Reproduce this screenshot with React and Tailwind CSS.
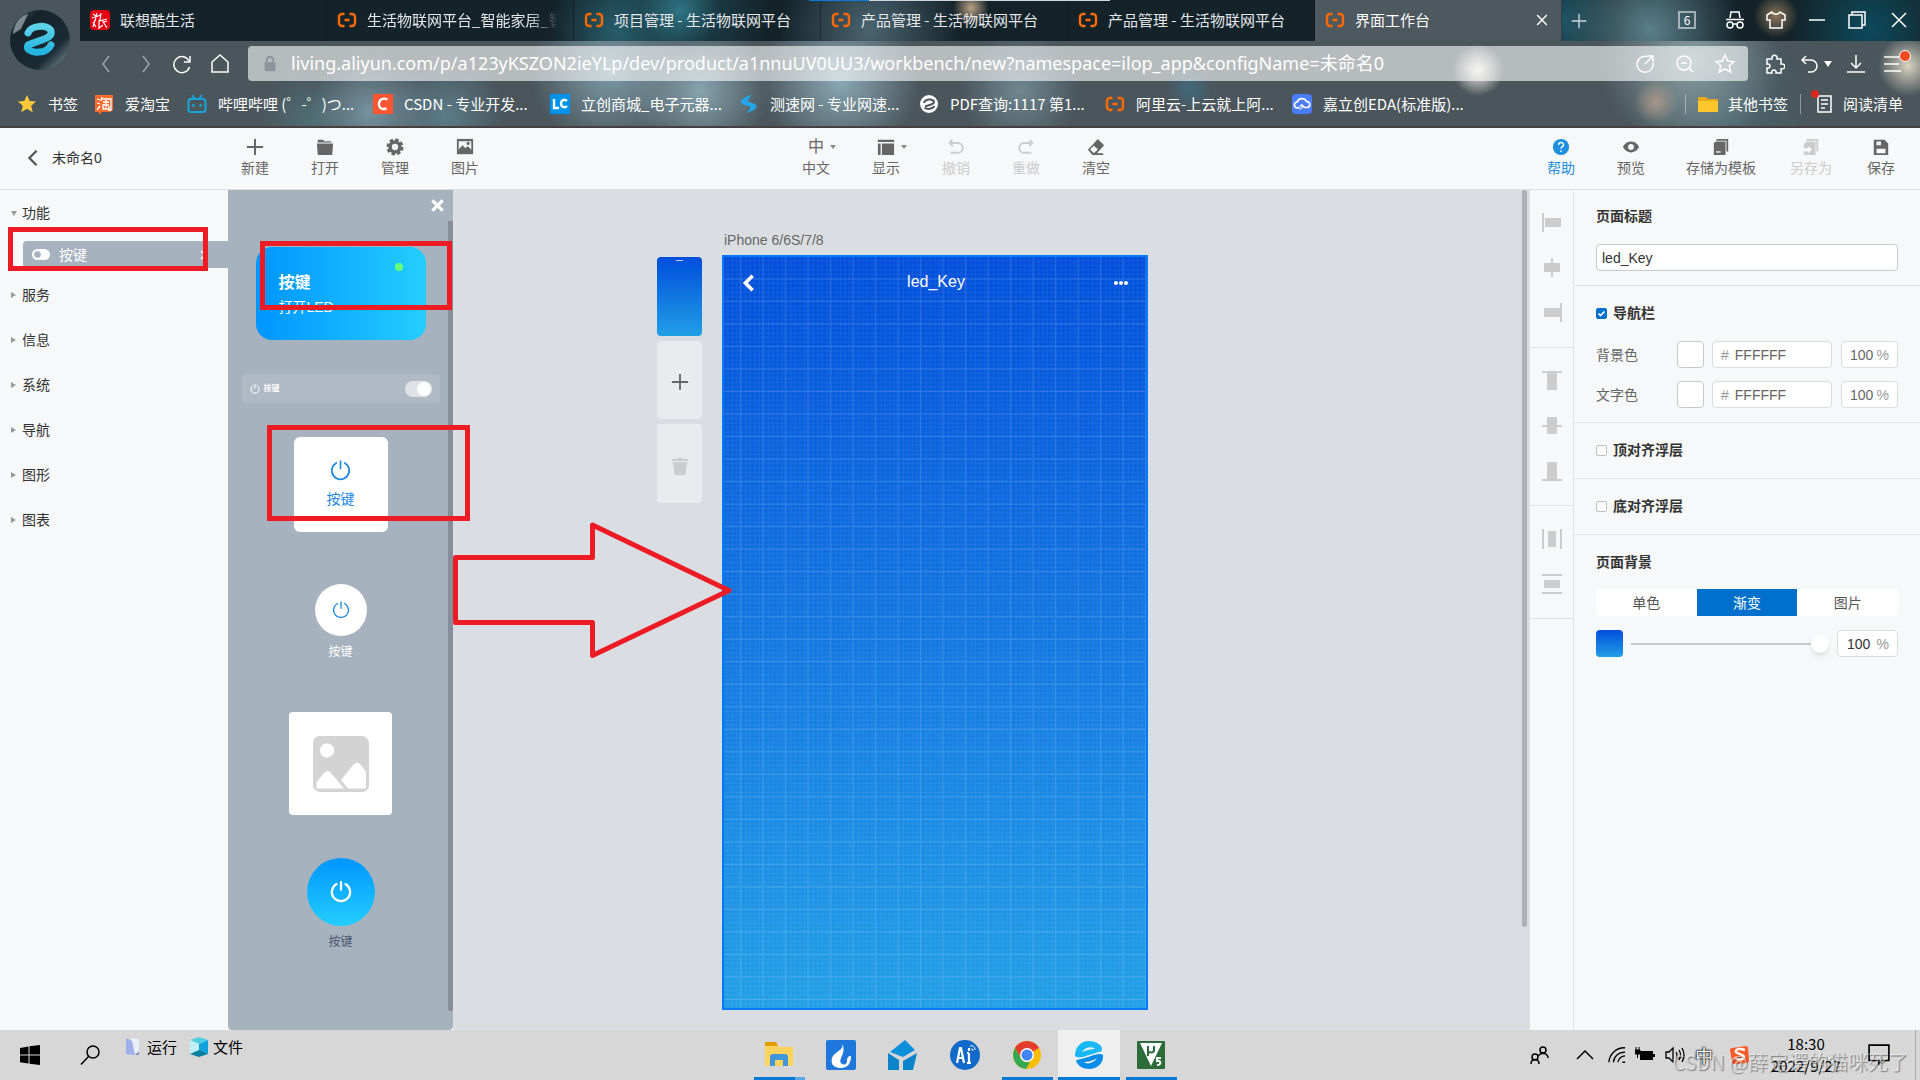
import React from 'react';

const TABS = [
  { title: '联想酷生活', icon: 'lenovo' },
  { title: '生活物联网平台_智能家居_智能', icon: 'aliyun', fade: true },
  { title: '项目管理 - 生活物联网平台', icon: 'aliyun' },
  { title: '产品管理 - 生活物联网平台', icon: 'aliyun' },
  { title: '产品管理 - 生活物联网平台', icon: 'aliyun' },
  { title: '界面工作台', icon: 'aliyun', active: true },
];

const BOOKMARKS = [
  { title: '书签', icon: 'star', width: 'w-[77px]' },
  { title: '爱淘宝', icon: 'taobao', width: 'w-[93px]' },
  { title: '哔哩哔哩 (゜-゜)つ...', icon: 'bili', width: 'w-[186px]' },
  { title: 'CSDN - 专业开发...', icon: 'csdn', width: 'w-[177px]' },
  { title: '立创商城_电子元器...', icon: 'lc', width: 'w-[189px]' },
  { title: '测速网 - 专业网速...', icon: 'speed', width: 'w-[180px]' },
  { title: 'PDF查询:1117 第1...', icon: 'pdf', width: 'w-[186px]' },
  { title: '阿里云-上云就上阿...', icon: 'aliyun', width: 'w-[187px]' },
  { title: '嘉立创EDA(标准版)...', icon: 'eda', width: 'w-[180px]' },
];

const FILE_TOOLS = [
  { name: '新建', icon: 'plus' },
  { name: '打开', icon: 'folder' },
  { name: '管理', icon: 'gear' },
  { name: '图片', icon: 'image' },
];

const EDIT_TOOLS = [
  { name: '中文', icon: 'lang', caret: true },
  { name: '显示', icon: 'layout', caret: true },
  { name: '撤销', icon: 'undo', disabled: true },
  { name: '重做', icon: 'redo', disabled: true },
  { name: '清空', icon: 'eraser' },
];

const SAVE_TOOLS = [
  { name: '帮助', icon: 'help', active: true },
  { name: '预览', icon: 'eye' },
  { name: '存储为模板', icon: 'template', wide: true },
  { name: '另存为', icon: 'saveas', disabled: true },
  { name: '保存', icon: 'save' },
];

const CATEGORIES = ['服务', '信息', '系统', '导航', '图形', '图表'];

const ALIGN_GROUPS = [
  [
    'M1 1h2v19h-2z M4 6h16v9h-16z',
    'M10 1h2v19h-2z M3 6h16v9h-16z',
    'M19 1h2v19h-2z M3 6h16v9h-16z',
  ],
  [
    'M1 1h20v2h-20z M6 3h10v17h-10z',
    'M1 10h20v2h-20z M6 2h10v17h-10z',
    'M1 19h20v2h-20z M6 2h10v17h-10z',
  ],
  [
    'M1 1h2v20h-2z M19 1h2v20h-2z M7 3h8v16h-8z',
    'M1 1h20v2h-20z M1 19h20v2h-20z M3 7h16v8h-16z',
  ],
];

const SITE_ICONS = {
  lenovo: (
    <>
      <rect width="20" height="20" rx="4" fill="#e60012" />
      <path d="M3 4l3 2M2 8l9-3M7 3l-2 8M11 3l-1 7M3 12l3 5M5 10l-2 7M9 10v8l4-3M9 11l8-2M12 10l5 8M14 12l3-1" stroke="#fff" strokeWidth="1.2" fill="none" />
    </>
  ),
  aliyun: (
    <path d="M7.500 4H5a3 3 0 0 0-3 3v6a3 3 0 0 0 3 3h2.500M12.500 4H15a3 3 0 0 1 3 3v6a3 3 0 0 1-3 3h-2.500M7.500 10h5" stroke="#ff6a00" strokeWidth="2.400" fill="none" />
  ),
  star: <path d="M10 1l2.700 6 6.300.6-4.800 4.200 1.500 6.400L10 14.800l-5.700 3.400 1.500-6.400L1 7.600 7.300 7z" fill="#ffc93c" />,
  taobao: (
    <>
      <path d="M1 1h18v15l-3 2H8l-3 3v-3H1z" fill="#ff6a2b" />
      <path d="M3 5l3 1M3 9l3 1M3 16l3-4M8 3l-1 4M8 5h9v11h-3M9 8h6M8 11h7M12 6v8M9 12v3h6v-3" stroke="#fff" strokeWidth="1.300" fill="none" />
    </>
  ),
  bili: (
    <>
      <path d="M5 1l3 4M15 1l-3 4" stroke="#16a6dc" strokeWidth="2" />
      <rect x="1.500" y="5" width="17" height="13" rx="2.500" fill="none" stroke="#16a6dc" strokeWidth="2" />
      <path d="M6.500 10v3M13.500 10v3" stroke="#16a6dc" strokeWidth="2" />
    </>
  ),
  csdn: (
    <>
      <rect width="20" height="20" fill="#fc5531" />
      <path d="M14.500 5.500c-4-2-8-.5-8.500 4-.4 4.500 3 6.500 7.500 5" stroke="#fff" strokeWidth="2.400" fill="none" />
    </>
  ),
  lc: (
    <>
      <rect width="20" height="20" fill="#0093e9" />
      <path d="M4 5v9h5M17 7c-2.500-2.500-6-.8-6 2.500s3.500 5 6 2.500" stroke="#fff" strokeWidth="2.400" fill="none" />
    </>
  ),
  speed: <path d="M13 1C4 3 0 7 3 10c2 2 7 1 8 3 1 2-2 4-4 6 8-2 12-5 10-8-1.500-2.500-7-1.500-8-4-.6-2 2-4 4-6z" fill="#25a5e8" />,
  pdf: (
    <>
      <circle cx="10" cy="10" r="9" fill="#fff" />
      <path d="M5 9c1-4 9-5 10-1 0 2-3 2.500-9 4.500M15.500 12c-2 3-7 4-10 1.500" stroke="#4b565e" strokeWidth="2" fill="none" />
    </>
  ),
  eda: (
    <>
      <rect width="20" height="20" rx="4" fill="#4a7dff" />
      <path d="M7 14H5.500a3 3 0 0 1-.3-6A5 5 0 0 1 14.500 7.500a3 3 0 0 1 .5 6h-2.500L9 10.500" stroke="#fff" strokeWidth="1.700" fill="none" />
      <circle cx="8.500" cy="13.500" r="1.500" fill="none" stroke="#fff" />
    </>
  ),
};

const TOOL_ICONS = {
  plus: <path d="M10 1v18M1 10h18" stroke="currentColor" strokeWidth="2.200" />,
  folder: <path d="M2 2h6l1 1.500h8V5H2zM1 6h18l-1 13H2z" fill="currentColor" />,
  gear: (
    <>
      <circle cx="10" cy="10" r="5.500" fill="none" stroke="currentColor" strokeWidth="4" />
      <circle cx="10" cy="10" r="8" fill="none" stroke="currentColor" strokeWidth="3" strokeDasharray="3.800 2.483" />
    </>
  ),
  image: (
    <>
      <path d="M1 1h18v17H1z" fill="currentColor" />
      <path d="M3 13l4-4 3 3 3-2 4 4V3.500H3z" fill="#f6f8f9" />
      <path d="M3 15v-2l4-5 3.500 3.500L13 9l4 4v2z" fill="currentColor" />
      <circle cx="13.500" cy="6" r="1.700" fill="currentColor" />
    </>
  ),
  layout: <path d="M1 2h18v2.500H1zM1 6h3v13H1zM5.500 6H19v13H5.500z" fill="currentColor" />,
  undo: <path d="M6 2L3 5.500 6.500 9M3 5.500h9a5 5 0 0 1 0 11H4" stroke="currentColor" strokeWidth="2.200" fill="none" />,
  redo: <path d="M14 2l3 3.500L13.500 9M17 5.500H8a5 5 0 0 0 0 11h8" stroke="currentColor" strokeWidth="2.200" fill="none" />,
  eraser: (
    <>
      <path d="M12 1l7 7-8 9H18v2H6l-5-6z" fill="currentColor" />
      <path d="M7.500 8.500l4.500 4-3.500 4H7l-3.500-3.800z" fill="#f6f8f9" />
    </>
  ),
  help: (
    <>
      <circle cx="10" cy="10" r="9" fill="#1f8fe0" />
      <path d="M7.300 7.800C7.300 4 13 4.200 12.800 7.600c-.1 2-2.800 2-2.800 4.400M10 13.500v2" stroke="#fff" strokeWidth="1.500" fill="none" />
    </>
  ),
  eye: (
    <>
      <path d="M1 10c4-8 14-8 18 0-4 8-14 8-18 0z" fill="currentColor" />
      <circle cx="10" cy="10" r="3.200" fill="#f6f8f9" />
    </>
  ),
  template: (
    <>
      <path d="M5 1h13v14h-2V3H5z" fill="currentColor" />
      <path d="M4 4h11v15H2V6z" fill="currentColor" />
      <path d="M4.500 15.500h5" stroke="#f6f8f9" strokeWidth="1.500" />
    </>
  ),
  saveas: (
    <>
      <path d="M5 1h13v14h-2V3H5z" fill="currentColor" />
      <path d="M5 4h10v15H2v-4h5v2l4-4-4-4v2H2V7z" fill="currentColor" />
    </>
  ),
  save: (
    <>
      <path d="M2 2h12l4 4v13H2z" fill="currentColor" />
      <path d="M5 4h5v4H5zM5 12h10v5H5z" fill="#f6f8f9" />
    </>
  ),
};

const SiteIcon = ({ name }) => (
  <svg viewBox="0 0 20 20" className="w-5 h-5 shrink-0" aria-hidden="true">{SITE_ICONS[name]}</svg>
);

const PowerIcon = ({ className, width = 2 }) => (
  <svg viewBox="0 0 20 20" className={className} fill="none" stroke="currentColor" strokeWidth={width} strokeLinecap="round" aria-hidden="true">
    <path d="M10 1v7M6 2.800a8.300 8.300 0 1 0 8 0" />
  </svg>
);

const LineIcon = ({ d, className = 'w-5 h-5', width = 1.5 }) => (
  <svg viewBox="0 0 20 20" className={className} fill="none" stroke="currentColor" strokeWidth={width} aria-hidden="true">
    <path d={d} />
  </svg>
);

const BrowserLogo = () => (
  <svg viewBox="0 0 60 60" className="w-[60px] h-[60px]" aria-hidden="true">
    <defs>
      <linearGradient id="orb" x1="0" y1="0" x2="1" y2="1">
        <stop offset="0" stopColor="#4e5e68" />
        <stop offset="0.25" stopColor="#15232b" />
        <stop offset="0.7" stopColor="#1b2b33" />
        <stop offset="1" stopColor="#8fa3ab" />
      </linearGradient>
      <linearGradient id="orbE" x1="0" y1="0" x2="0" y2="1">
        <stop offset="0" stopColor="#5fd3ea" />
        <stop offset="1" stopColor="#22b4df" />
      </linearGradient>
    </defs>
    <circle cx="30" cy="30" r="30" fill="url(#orb)" />
    <path d="M3 24C4 14 10 6 18 4l-7 15z" fill="#b9c6cb" opacity="0.6" />
    <path d="M18 23c3-8 20-9 23-2 2 7-8 8-23 14-3 4 4 8 11 7 6 0 10-3 12-7" stroke="url(#orbE)" strokeWidth="7" strokeLinecap="round" strokeLinejoin="round" fill="none" />
  </svg>
);

const Browser = () => (
  <header className="relative shrink-0 text-white text-[15px] border-b-2 border-[#453f40] bg-[#4a555c] bg-[radial-gradient(circle_at_1478px_70px,#e8e6dd_0px,#e8e6dd80_14px,transparent_26px),radial-gradient(circle_at_1656px_102px,#a8978a_0px,transparent_22px),radial-gradient(circle_at_1908px_66px,#d8d4bf_0px,transparent_30px),radial-gradient(circle_at_370px_112px,#7593a0_0px,transparent_60px),radial-gradient(circle_at_445px_116px,#5b7c88_0px,transparent_60px),radial-gradient(circle_at_310px_120px,#4f6d74_0px,transparent_50px),radial-gradient(circle_at_610px_70px,#7d9da8_0px,transparent_80px),radial-gradient(circle_at_700px_90px,#86a3ad_0px,transparent_70px),radial-gradient(circle_at_840px_80px,#8aa9b5_0px,transparent_80px),radial-gradient(circle_at_1020px_90px,#6f8790_0px,transparent_60px),radial-gradient(circle_at_1190px_88px,#41697b_0px,transparent_24px),radial-gradient(circle_at_1690px_60px,#8a9fa3_0px,transparent_90px),radial-gradient(circle_at_1720px_110px,#4c686f_0px,transparent_90px)] font-['Noto_Sans_CJK_SC',sans-serif]">
    <div className="flex">
      <div className="w-[80px] shrink-0 flex justify-center pt-[10px]">
        <BrowserLogo />
      </div>
      <div className="flex-1 min-w-0">
        <nav className="flex items-center h-[41px] bg-[#14232a] bg-[radial-gradient(circle_at_600px_10px,#2f7483_0px,#1f4b5880_40px,transparent_90px),radial-gradient(circle_at_540px_30px,#2a6270_0px,transparent_70px),radial-gradient(circle_at_891px_8px,#b8a183_0px,transparent_18px),radial-gradient(circle_at_790px_30px,#4b6470_0px,transparent_90px),radial-gradient(circle_at_1696px_16px,#8a7458_0px,transparent_22px),radial-gradient(circle_at_1570px_30px,#5b7f8a_0px,transparent_90px),radial-gradient(circle_at_1480px_20px,#1d5566_0px,transparent_60px),radial-gradient(circle_at_1790px_30px,#0d4a5c_0px,transparent_80px)]">
          {TABS.map((tab, i) => (
            <button
              key={i}
              className={`flex items-center gap-[10px] w-[247px] min-w-0 h-[41px] pl-[10px] pb-[2px] text-left border-r border-black/30 ${tab.active ? 'bg-[#4d585f] text-white' : 'text-gray-200'}`}
            >
              <SiteIcon name={tab.icon} />
              <span className={`whitespace-nowrap overflow-hidden ${tab.fade ? 'w-[190px] [mask-image:linear-gradient(to_right,#000_160px,transparent_192px)]' : 'flex-1'}`}>{tab.title}</span>
              {tab.active && <LineIcon className="w-[14px] h-[14px] mr-3" d="M3 3l14 14M17 3L3 17" width={2} />}
            </button>
          ))}
          <button aria-label="新标签页" className="ml-2 text-gray-300"><LineIcon className="w-[18px] h-[18px]" d="M10 2v16M2 10h16" /></button>
          <div className="ml-auto flex items-center pr-[11px] pb-[2px]">
            <button className="w-[18px] h-[18px] border-2 border-gray-300/70 text-xs leading-[14px] mr-[29px]">6</button>
            <button aria-label="无痕" className="mr-[21px]"><LineIcon d="M5 8l1-6h8l1 6M1 9.500h18M8 15a3 3 0 1 0-6 0 3 3 0 0 0 6 0zM18 15a3 3 0 1 0-6 0 3 3 0 0 0 6 0zM8 14h4" /></button>
            <button aria-label="皮肤" className="mr-[21px]"><LineIcon d="M6 2L1 5v5h3v8h12v-8h3V5l-5-3c-1 3-7 3-8 0z" /></button>
            <button aria-label="最小化" className="mr-[20px]"><LineIcon d="M2 10h16" /></button>
            <button aria-label="还原" className="mr-[22px]"><LineIcon d="M2 5h13v13H2zM5 5V2h13v13h-3" /></button>
            <button aria-label="关闭"><LineIcon d="M3 3l14 14M17 3L3 17" /></button>
          </div>
        </nav>
        <div className="flex items-center h-[45px] pl-[16px] pr-[17px]">
          <button aria-label="后退" className="mr-5 text-gray-400"><LineIcon d="M13 2L7 10l6 8" /></button>
          <button aria-label="前进" className="mr-4 text-gray-400"><LineIcon d="M7 2l6 8-6 8" /></button>
          <button aria-label="刷新" className="mr-[18px]"><LineIcon d="M17 7A8 8 0 1 0 17.500 13M18 2v6h-6" /></button>
          <button aria-label="主页" className="mr-[18px]"><LineIcon d="M2 18V8l8-7 8 7v10z" /></button>
          <div className="flex-1 min-w-0 h-[35px] flex items-center rounded bg-white/60 pl-[13px] pr-[13px]">
            <svg viewBox="0 0 20 20" className="w-[18px] h-[18px] mr-[12px] shrink-0" aria-hidden="true">
              <path d="M4 8h12v10H4z" fill="#8d949c" />
              <path d="M6.500 8V5.500a3.500 3.500 0 0 1 7 0V8" stroke="#8d949c" strokeWidth="2" fill="none" />
            </svg>
            <input
              aria-label="地址"
              className="flex-1 min-w-0 bg-transparent outline-none text-lg text-white pb-[2px] font-['Noto_Sans','Noto_Sans_CJK_SC',sans-serif]"
              defaultValue="living.aliyun.com/p/a123yKSZON2ieYLp/dev/product/a1nnuUV0UU3/workbench/new?namespace=ilop_app&configName=未命名0"
            />
            <div className="flex items-center gap-5">
              <button aria-label="分享"><LineIcon d="M12 2.500A8 8 0 1 0 18 9M10 10l8-8M12 2h6v6" /></button>
              <button aria-label="缩小"><LineIcon d="M16 9A7 7 0 1 0 2 9a7 7 0 0 0 14 0zM14 14l4 4M6 9h6" /></button>
              <button aria-label="收藏"><LineIcon d="M10 1l2.700 6 6.300.6-4.800 4.200 1.500 6.400L10 14.800l-5.700 3.400 1.500-6.400L1 7.600 7.300 7z" /></button>
            </div>
          </div>
          <div className="flex items-center pl-[17px]">
            <button aria-label="扩展" className="mr-[15px]"><LineIcon d="M2 5h5c-1-5 6-5 5 0h4v5c5-1 5 6 0 5v4h-5c1-4-5-4-4 0H2v-5c4 1 4-5 0-4z" /></button>
            <button aria-label="撤销关闭" className="mr-[14px] flex items-center gap-1">
              <LineIcon d="M6 2L2 6l4 4M2 6h9a6 6 0 0 1 0 12H8" />
              <svg viewBox="0 0 8 6" className="w-2 h-[6px]" aria-hidden="true"><path d="M0 0h8L4 6z" fill="#fff" /></svg>
            </button>
            <button aria-label="下载" className="mr-[17px]"><LineIcon d="M10 1v13M5 9l5 5 5-5M1 18h18" /></button>
            <button aria-label="菜单" className="relative">
              <LineIcon d="M1 3h15M1 10h15M1 17h17" />
              <span className="absolute -top-1 -right-2 w-3 h-3 rounded-full bg-[#f04a23] border border-white" />
            </button>
          </div>
        </div>
      </div>
    </div>
    <nav className="flex items-center h-[40px] pl-[17px] pr-[17px] pb-1">
      {BOOKMARKS.map((b) => (
        <a key={b.title} href="#" className={`flex items-center gap-[11px] shrink-0 whitespace-nowrap ${b.width}`}>
          <SiteIcon name={b.icon} />
          <span>{b.title}</span>
        </a>
      ))}
      <div className="ml-auto flex items-center h-5">
        <a href="#" className="flex items-center gap-[10px] h-5 border-l border-white/40 pl-3 pr-3">
          <svg viewBox="0 0 20 20" className="w-5 h-5" aria-hidden="true">
            <path d="M0 3h8l2 2h10v13H0z" fill="#e8a81c" />
            <path d="M0 7h20v11H0z" fill="#ffc72c" />
          </svg>
          其他书签
        </a>
        <a href="#" className="relative flex items-center gap-[10px] h-5 border-l border-white/40 pl-3">
          <LineIcon d="M5 2h13v16H5zM8 6h7M8 10h7M8 14h4" />
          <span className="absolute -top-1 left-[10px] w-2 h-2 rounded-full bg-[#d9281e]" />
          阅读清单
        </a>
      </div>
    </nav>
    <div className="absolute top-0 left-[809px] w-[301px] h-px bg-gray-300">
      <div className="w-[60px] h-px bg-[#0a78d6]" />
    </div>
  </header>
);

const ToolButton = ({ tool }) => (
  <button
    disabled={tool.disabled}
    className={`flex flex-col items-center gap-px ${tool.wide ? 'w-[110px]' : 'w-[70px]'} ${tool.active ? 'text-[#1f8fe0]' : tool.disabled ? 'text-[#ccc]' : 'text-[#666]'}`}
  >
    <span className="flex items-center gap-[6px] h-5">
      {tool.icon === 'lang' ? (
        <span className="text-base leading-5">中</span>
      ) : (
        <svg viewBox="0 0 20 20" className="w-[18px] h-[18px]" aria-hidden="true">{TOOL_ICONS[tool.icon]}</svg>
      )}
      {tool.caret && (
        <svg viewBox="0 0 6 4" className="w-[6px] h-1 -mr-3" aria-hidden="true"><path d="M0 0h6L3 4z" fill="#888" /></svg>
      )}
    </span>
    <span className="leading-5">{tool.name}</span>
  </button>
);

const Toolbar = () => (
  <div className="flex items-center h-[62px] shrink-0 bg-[#f6f8f9] border-b border-[#dcdfe3] pr-1 pb-[2px]">
    <button className="flex items-center gap-[10px] w-[220px] pl-6 text-[#333]">
      <LineIcon className="w-[18px] h-[18px] text-[#555]" d="M14 2l-8 8 8 8" width={2.5} />
      未命名0
    </button>
    <div className="flex">{FILE_TOOLS.map((t) => <ToolButton key={t.name} tool={t} />)}</div>
    <div className="flex ml-[281px]">{EDIT_TOOLS.map((t) => <ToolButton key={t.name} tool={t} />)}</div>
    <div className="flex ml-auto">{SAVE_TOOLS.map((t) => <ToolButton key={t.name} tool={t} />)}</div>
  </div>
);

const Sidebar = () => (
  <aside className="w-[228px] shrink-0 bg-[#f6f8f9] text-[#333]">
    <button className="flex items-center gap-[5px] h-[45px] pl-[11px]">
      <svg viewBox="0 0 6 6" className="w-[6px] h-[6px]" aria-hidden="true"><path d="M0 1h6L3 6z" fill="#999" /></svg>
      功能
    </button>
    <button className="flex items-center h-[27px] ml-[23px] mt-[6px] mb-1 w-[205px] pl-[9px] pr-5 rounded-l bg-[#a6b2be] text-white">
      <svg viewBox="0 0 18 11" className="w-[18px] h-[11px] mr-[9px]" aria-hidden="true">
        <rect width="18" height="11" rx="5.500" fill="#fff" />
        <circle cx="5.500" cy="5.500" r="3.300" fill="#a6b2be" />
      </svg>
      按键
      <LineIcon className="w-[10px] h-[10px] ml-auto" d="M6 2l8 8-8 8" width={3} />
    </button>
    {CATEGORIES.map((name) => (
      <button key={name} className="flex items-center gap-[5px] w-full h-[45px] pl-[11px]">
        <svg viewBox="0 0 6 6" className="w-[6px] h-[6px]" aria-hidden="true"><path d="M0 0v6l5-3z" fill="#999" /></svg>
        {name}
      </button>
    ))}
  </aside>
);

const Palette = () => (
  <section className="relative w-[225px] shrink-0 bg-[#a6b2be] rounded-b-sm flex flex-col items-center">
    <button aria-label="关闭" className="self-end mr-[9px] mt-[9px] text-white">
      <LineIcon className="w-[13px] h-[13px]" d="M2 2l16 16M18 2L2 18" width={5} />
    </button>

    <div className="relative w-[170px] h-[93px] mt-[35px] rounded-2xl bg-linear-to-r/srgb from-[#0095ff] to-[#23ceff] text-white pl-[23px] pt-6">
      <p className="text-base leading-6 font-bold">按键</p>
      <p className="leading-6">打开LED</p>
      <span className="absolute top-4 right-[23px] w-2 h-2 rounded-full bg-[#66ff77]" />
    </div>

    <div className="flex items-center w-[198px] h-[29px] mt-[34px] rounded bg-white/10 px-2 text-white">
      <PowerIcon className="w-[10px] h-[10px] mr-1" />
      <span className="text-[8px] leading-3 font-bold">按键</span>
      <span className="ml-auto w-[27px] h-4 rounded-full bg-white/60 flex justify-end p-px">
        <span className="w-[14px] h-[14px] rounded-full bg-white" />
      </span>
    </div>

    <div className="w-[94px] h-[95px] mt-[34px] rounded-md bg-white text-[#1e88e5] flex flex-col items-center pt-[23px] gap-2">
      <PowerIcon className="w-[21px] h-[21px]" width={1.6} />
      <span className="leading-5">按键</span>
    </div>

    <div className="mt-[52px] flex flex-col items-center">
      <div className="w-[52px] h-[52px] rounded-full bg-white text-[#1e88e5] flex items-center justify-center">
        <PowerIcon className="w-[18px] h-[18px]" width={1.5} />
      </div>
      <span className="mt-2 text-xs leading-4 text-white">按键</span>
    </div>

    <div className="w-[103px] h-[103px] mt-[52px] rounded-sm bg-white flex items-center justify-center">
      <svg viewBox="0 0 56 56" className="w-[56px] h-[56px]" aria-hidden="true">
        <rect width="56" height="56" rx="7" fill="#d3d3d3" />
        <circle cx="14" cy="14.500" r="7.200" fill="#fff" />
        <path d="M3.500 52.500v-6L11 37q3.500-4 7 0l13 15.500zM35 52.500L28 44l12-15q4-4.500 8 0l5 7v16.500z" fill="#fff" />
      </svg>
    </div>

    <div className="mt-[43px] flex flex-col items-center">
      <div className="w-[68px] h-[68px] rounded-full bg-linear-to-b/srgb from-[#0095ff] to-[#23ceff] text-white flex items-center justify-center">
        <PowerIcon className="w-[22px] h-[22px]" />
      </div>
      <span className="mt-2 text-xs leading-4 text-[#4b5670]">按键</span>
    </div>

    <div className="absolute right-0 top-[31px] bottom-[19px] w-[5px] rounded-b bg-[#858e9a]" />
  </section>
);

const Canvas = () => (
  <main className="relative flex-1 min-w-0 bg-[#dadde2] flex items-start gap-5 pl-[204px] pt-10">
    <div className="flex flex-col gap-[5px] mt-[27px]">
      <button aria-label="页面 1" className="w-[45px] h-[79px] rounded-sm bg-linear-to-b/srgb from-[#004edb] to-[#219ee7] flex justify-center">
        <span className="w-[7px] h-px mt-[3px] bg-white/70" />
      </button>
      <button aria-label="添加页面" className="w-[45px] h-[78px] rounded-sm bg-[#e8ecef] text-[#666] flex items-center justify-center pt-1">
        <LineIcon className="w-[18px] h-[18px]" d="M10 1v18M1 10h18" width={2} />
      </button>
      <button aria-label="删除页面" className="w-[45px] h-[79px] rounded-sm bg-[#e8ecef] text-[#ccc] flex items-center justify-center pt-1">
        <svg viewBox="0 0 18 18" className="w-[18px] h-[18px]" aria-hidden="true">
          <path d="M1 2h5l1-1h4l1 1h5v2H1zM2 5h14l-1.500 13h-11z" fill="currentColor" />
        </svg>
      </button>
    </div>
    <div>
      <p className="text-[#666] leading-5 ml-[2px] mb-[5px]">iPhone 6/6S/7/8</p>
      <div className="relative w-[426px] h-[755px] border-2 border-[#007bff] bg-linear-to-b/srgb from-[#004edb] to-[#219ee7]">
        <svg viewBox="0 0 375 667" preserveAspectRatio="none" className="absolute inset-0 w-full h-full" aria-hidden="true">
          <defs>
            <pattern id="minor" width="4" height="4" patternUnits="userSpaceOnUse">
              <path d="M3.500 0v4M0 3.500h4" stroke="#fff" strokeOpacity="0.07" strokeWidth="1" />
            </pattern>
            <pattern id="major" width="20" height="20" x="-5" patternUnits="userSpaceOnUse">
              <path d="M19.500 0v20M0 19.500h20" stroke="#fff" strokeOpacity="0.12" strokeWidth="1" />
            </pattern>
          </defs>
          <rect width="375" height="667" fill="url(#minor)" />
          <rect width="375" height="667" fill="url(#major)" />
        </svg>
        <div className="relative flex items-center justify-between h-12 pt-1 pl-4 pr-[18px] text-white">
          <LineIcon className="w-[18px] h-[18px]" d="M14 2l-8 8 8 8" width={4} />
          <span className="text-base leading-6 pb-[2px]">led_Key</span>
          <svg viewBox="0 0 14 4" className="w-[14px] h-1" aria-hidden="true">
            <path d="M2 2h0M7 2h0M12 2h0" stroke="#fff" strokeWidth="4" strokeLinecap="round" />
          </svg>
        </div>
      </div>
    </div>
    <div className="absolute top-0 right-[3px] w-[5px] h-[737px] rounded-full bg-[#aeb2b7]" />
  </main>
);

const AlignBar = () => (
  <div className="w-[44px] shrink-0 bg-[#f6f8f9] border-r border-[#dfe2e5] text-[#ccc]">
    {ALIGN_GROUPS.map((group, i) => (
      <div key={i} className="flex flex-col items-center gap-[23px] pt-[22px] pb-[23px] border-b border-[#dfe2e5]">
        {group.map((d) => (
          <button key={d} aria-label="对齐">
            <svg viewBox="0 0 22 22" className="w-[22px] h-[22px]" aria-hidden="true"><path d={d} fill="currentColor" /></svg>
          </button>
        ))}
      </div>
    ))}
  </div>
);

const Check = ({ label, checked }) => (
  <label className="flex items-center gap-[6px] h-5 font-bold">
    <span className="relative flex w-[11px] h-[11px]">
      <input
        type="checkbox"
        defaultChecked={checked}
        className="appearance-none w-[11px] h-[11px] rounded-[2px] border border-[#c0c0c0] bg-white checked:bg-[#0070cc] checked:border-[#0070cc]"
      />
      {checked && (
        <svg viewBox="0 0 11 11" className="absolute inset-0 pointer-events-none" aria-hidden="true">
          <path d="M2.500 5.500l2 2 4-4" stroke="#fff" strokeWidth="1.700" fill="none" />
        </svg>
      )}
    </span>
    {label}
  </label>
);

const ColorRow = ({ label }) => (
  <div className="flex items-center text-[#666]">
    <span className="w-[81px]">{label}</span>
    <button aria-label={`选择${label}`} className="w-[27px] h-[27px] rounded-sm border border-[#c4cace] bg-white" />
    <label className="flex items-center flex-1 min-w-0 h-[27px] ml-2 rounded-sm border border-[#dadde0] bg-white pl-2">
      <span className="text-[#999] mr-[6px]">#</span>
      <input aria-label={label} className="w-full min-w-0 outline-none" defaultValue="FFFFFF" />
    </label>
    <label className="flex items-center w-[57px] h-[27px] ml-[9px] rounded-sm border border-[#dadde0] bg-white px-2">
      <input aria-label={`${label}不透明度`} className="w-full min-w-0 outline-none" defaultValue="100" />
      <span className="text-[#999]">%</span>
    </label>
  </div>
);

const Properties = () => (
  <aside className="w-[346px] shrink-0 bg-[#f6f8f9] text-[#333]">
    <div className="px-[22px] pt-4 pb-[14px] border-b border-[#dfe2e5]">
      <label htmlFor="page-title" className="block leading-5 mb-[18px] font-bold">页面标题</label>
      <input id="page-title" defaultValue="led_Key" className="block w-full h-[27px] px-[5px] rounded-sm border border-[#c4cace] bg-white outline-none" />
    </div>
    <div className="px-[22px] pt-[17px] pb-[14px] border-b border-[#dfe2e5] flex flex-col">
      <Check label="导航栏" checked />
      <div className="flex flex-col gap-[13px] mt-[18px]">
        <ColorRow label="背景色" />
        <ColorRow label="文字色" />
      </div>
    </div>
    <div className="px-[22px] py-[17px] h-[56px] border-b border-[#dfe2e5]"><Check label="顶对齐浮层" /></div>
    <div className="px-[22px] py-[17px] h-[56px] border-b border-[#dfe2e5]"><Check label="底对齐浮层" /></div>
    <div className="px-[22px] pt-[17px]">
      <p className="leading-5 font-bold">页面背景</p>
      <div className="grid grid-cols-3 mt-[17px] rounded-sm overflow-hidden bg-white text-[#555]">
        <button className="h-[27px]">单色</button>
        <button className="h-[27px] bg-[#0070cc] text-white">渐变</button>
        <button className="h-[27px]">图片</button>
      </div>
      <div className="flex items-center mt-[14px]">
        <button aria-label="选择渐变" className="w-[27px] h-[27px] shrink-0 rounded-sm bg-linear-to-b/srgb from-[#004edb] to-[#219ee7]" />
        <input
          type="range"
          aria-label="不透明度"
          defaultValue="100"
          className="flex-1 min-w-0 ml-2 mr-2 h-[2px] appearance-none bg-[#c4c8cf] [&::-webkit-slider-thumb]:appearance-none [&::-webkit-slider-thumb]:w-[18px] [&::-webkit-slider-thumb]:h-[18px] [&::-webkit-slider-thumb]:rounded-full [&::-webkit-slider-thumb]:bg-white [&::-webkit-slider-thumb]:shadow-md"
        />
        <label className="flex items-center w-[61px] h-[27px] rounded-sm border border-[#dadde0] bg-white pl-[9px] pr-2">
          <input aria-label="不透明度数值" className="w-full min-w-0 outline-none" defaultValue="100" />
          <span className="text-[#999]">%</span>
        </label>
      </div>
    </div>
  </aside>
);

const APPS = [
  {
    name: '文件资源管理器',
    bar: 'bg-linear-to-r from-[#0078d7] from-80% to-[#5ba7e5] to-80%',
    icon: (
      <>
        <path d="M2 5h12l2 3h14v19H2z" fill="#ffd35c" />
        <path d="M2 3h11l2 4H2z" fill="#e39c00" />
        <path d="M7 27V18q0-3 3-3h12q3 0 3 3v9h-5v-6h-8v6z" fill="#3f96d8" />
      </>
    ),
  },
  {
    name: '火绒',
    icon: (
      <>
        <rect x="1" y="1" width="30" height="30" rx="2" fill="#1f77dc" />
        <path d="M17 4c3 7-7 8-10 15-2 8 4 10 9 10 7 0 10-5 10-12-3 0-4 2-4 5s-3 5-6 2c-3-4 6-10 1-20z" fill="#fff" />
      </>
    ),
  },
  {
    name: '盒子',
    icon: (
      <>
        <path d="M18 1L3 13l13 5 12-7z" fill="#0b8fdb" />
        <path d="M1 14l11 7v10H1zM30 14l-14 8v9h10z" fill="#0b84cc" />
      </>
    ),
  },
  {
    name: 'AI 助手',
    icon: (
      <>
        <circle cx="16" cy="16" r="15" fill="#1169c9" />
        <path d="M8 24l3-15h1l3 15M9 19h5M20 14v10M18 24h4M18 14h2M20 9v3" stroke="#fff" strokeWidth="2.200" fill="none" />
        <path d="M21 7c3-1 5 1 5 4M22 10c1 0 2 0 2 2" stroke="#fff" fill="none" />
      </>
    ),
  },
  {
    name: 'Chrome',
    bar: 'bg-[#0078d7]',
    icon: (
      <>
        <circle cx="16" cy="16" r="14" fill="#fbbc05" />
        <path d="M16 16L4 9a14 14 0 0 1 24 0z" fill="#ea4335" />
        <path d="M16 9h12.100a14 14 0 0 0-24.100 0l6 10z" fill="#e33b2e" />
        <path d="M4 9l6 10.500a7 7 0 0 0 9 3L15 30A14 14 0 0 1 4 9z" fill="#34a853" />
        <circle cx="16" cy="16" r="7" fill="#fff" />
        <circle cx="16" cy="16" r="5.500" fill="#4285f4" />
      </>
    ),
  },
  {
    name: '联想浏览器',
    bar: 'bg-[#0078d7]',
    active: true,
    icon: (
      <>
        <path d="M2 17C2 8 8 2 16 2c7 0 13 4 13 8 0 5-6 5-13 7-6 2-11 2-14 0z" fill="#19b9f7" />
        <path d="M3 22c2-3 8-3 14-5 5-2 10-3 13-1 1 8-6 14-14 14-6 0-11-3-13-8z" fill="#0a8de8" />
        <path d="M9 13c3-5 10-6 13-3-4 0-8 1-13 3zM24 19c-3 5-10 7-13 4 4 0 8-1 13-4z" fill="#efefef" />
        <path d="M1 20c9 1 16-5 29-7" stroke="#efefef" strokeWidth="1.500" fill="none" />
      </>
    ),
  },
  {
    name: 'Keil uVision5',
    bar: 'bg-[#0078d7]',
    icon: (
      <>
        <rect x="2" y="2" width="28" height="28" rx="1" fill="#2c6b3a" />
        <path d="M5 4h22L16 27z" fill="#fff" />
        <path d="M13 17V7M13 12q3 3 6 0V7M19 7v6" stroke="#2c6b3a" strokeWidth="2" fill="none" />
        <path d="M26 19h-4v3c4-1 5 4 0 4" stroke="#fff" strokeWidth="2" fill="none" />
      </>
    ),
  },
];

const Taskbar = () => (
  <footer className="relative flex h-[50px] shrink-0 bg-[#d7d7d7] text-black text-[15px] font-['Noto_Sans_CJK_SC',sans-serif]">
    <div className="w-[748px] flex items-center pl-5">
      <button aria-label="开始">
        <svg viewBox="0 0 20 20" className="w-5 h-5" aria-hidden="true">
          <path d="M0 3l8.500-1.500v8H0zM9.500 1.300L20 0v9.500H9.500zM0 10.500h8.500v8L0 17.300zM9.500 10.500H20V20L9.500 18.700z" />
        </svg>
      </button>
      <button aria-label="搜索" className="ml-10"><LineIcon d="M19 7a6 6 0 1 0-12 0 6 6 0 0 0 12 0zM8.500 11.500L1 19.500" /></button>
      <div className="flex items-center gap-3 ml-[25px] mb-4">
        <a href="#" className="flex items-center gap-1">
          <svg viewBox="0 0 18 20" className="w-[18px] h-[20px]" aria-hidden="true">
            <path d="M6 1l8 1v14l-8 1z" fill="#e9eefb" />
            <path d="M1 1l6 3 3 14-9-1z" fill="#9db0ea" />
            <path d="M10 18l4-4v4z" fill="#8b97b5" />
          </svg>
          运行
        </a>
        <a href="#" className="flex items-center gap-1">
          <svg viewBox="0 0 20 20" className="w-5 h-5" aria-hidden="true">
            <path d="M1 3l9-3 9 3-9 4z" fill="#4fd0e0" />
            <path d="M1 3l9 4v7l-9 3z" fill="#bff0f5" />
            <path d="M19 3l-9 4v7l9 3z" fill="#0fa2dc" />
            <path d="M1 17l9-4 9 4-9 3z" fill="#0b7f9f" />
          </svg>
          文件
        </a>
      </div>
    </div>
    <div className="flex">
      {APPS.map((app) => (
        <button key={app.name} aria-label={app.name} className={`flex flex-col items-center w-[62px] ${app.active ? 'bg-[#efefef]' : ''}`}>
          <svg viewBox="0 0 32 32" className="w-8 h-8 mt-[9px] mb-[6px]" aria-hidden="true">{app.icon}</svg>
          <span className={`h-[3px] ${app.active ? 'w-full' : 'w-[51px]'} ${app.bar || ''}`} />
        </button>
      ))}
    </div>
    <div className="flex items-center ml-auto pr-1">
      <button aria-label="人脉" className="mr-[25px]"><LineIcon d="M16 5a3 3 0 1 0-6 0 3 3 0 0 0 6 0zM8 12a3 3 0 1 0-6 0 3 3 0 0 0 6 0zM1 19c0-6 8-6 8 0M8 11c3-4 10-3 10 2" /></button>
      <button aria-label="显示隐藏的图标" className="mr-[13px]"><LineIcon d="M2 14l8-8 8 8" /></button>
      <LineIcon className="w-[18px] h-[18px] mr-[9px]" d="M1 18A17 17 0 0 1 19 2M6 18A12 12 0 0 1 19 7M11 18a8 8 0 0 1 8-7M16 18h3" />
      <svg viewBox="0 0 20 16" className="w-5 h-4 mr-[10px]" aria-hidden="true">
        <path d="M5 4h13v9H5zM18 7h2v3h-2z" />
        <path d="M0 3h5v4H0zM1 0v3M4 0v3M2.500 7v4" stroke="#000" />
      </svg>
      <LineIcon className="w-5 h-5 mr-[9px]" d="M1 7h3l4-4v14l-4-4H1zM11 7q2 3 0 6M14 5q3 5 0 10M17 3q4 7 0 14" width={1.3} />
      <span className="w-5 text-lg leading-5 mr-4 text-center text-white [text-shadow:0_0_1px_#000,0_0_2px_#000,0_0_2px_#000]">中</span>
      <svg viewBox="0 0 20 20" className="w-5 h-5 mr-2" aria-hidden="true">
        <path d="M2 3l14-2q2 0 2 2l1 12q0 3-2 3L4 19q-2 0-2-2L0 5q0-2 2-2z" fill="#fb5b2a" />
        <path d="M15 5c-5-2-10-1-9 2 1 2 8 2 8 5s-6 3-9 1" stroke="#fff" strokeWidth="2.500" fill="none" />
      </svg>
      <div className="w-[96px] mr-[14px] flex flex-col items-center leading-[22px]">
        <time>18:30</time>
        <time>2022/9/27</time>
      </div>
      <button aria-label="通知"><LineIcon className="w-[22px] h-[22px]" d="M1 1h18v14h-6l-3 3v-3H1z" /></button>
      <span className="ml-[25px] w-px h-[50px] bg-[#aaa]" />
    </div>
    <p className="absolute right-3 bottom-1 text-xl leading-7 whitespace-nowrap text-white/50 [text-shadow:1px_1px_1px_#0006]">CSDN @薛定谔的猫咪死了</p>
  </footer>
);

// Red boxes and the drag arrow that walk the reader through the steps
const Annotations = () => (
  <div className="absolute inset-0 pointer-events-none">
    <div className="absolute left-[8px] top-[227px] w-[200px] h-[44px] border-5 border-[#ed1c24]" />
    <div className="absolute left-[260px] top-[241px] w-[192px] h-[69px] border-5 border-[#ed1c24]" />
    <div className="absolute left-[267px] top-[425px] w-[203px] h-[96px] border-5 border-[#ed1c24]" />
    <svg viewBox="0 0 280 136" className="absolute left-[453px] top-[522px] w-[280px] h-[136px]" aria-hidden="true">
      <path d="M2.500 35.500H139.500V3L276 68.500 139.500 133.500V100.500H2.500z" fill="none" stroke="#ed1c24" strokeWidth="5" strokeLinejoin="round" />
    </svg>
  </div>
);

const App = () => {
  return (
    <div className="relative h-screen flex flex-col overflow-hidden text-sm font-['Liberation_Sans','Noto_Sans_CJK_SC',sans-serif]">
      <Browser />
      <Toolbar />
      <div className="flex flex-1 min-h-0">
        <Sidebar />
        <Palette />
        <Canvas />
        <AlignBar />
        <Properties />
      </div>
      <Taskbar />
      <Annotations />
    </div>
  );
};

export default App;
